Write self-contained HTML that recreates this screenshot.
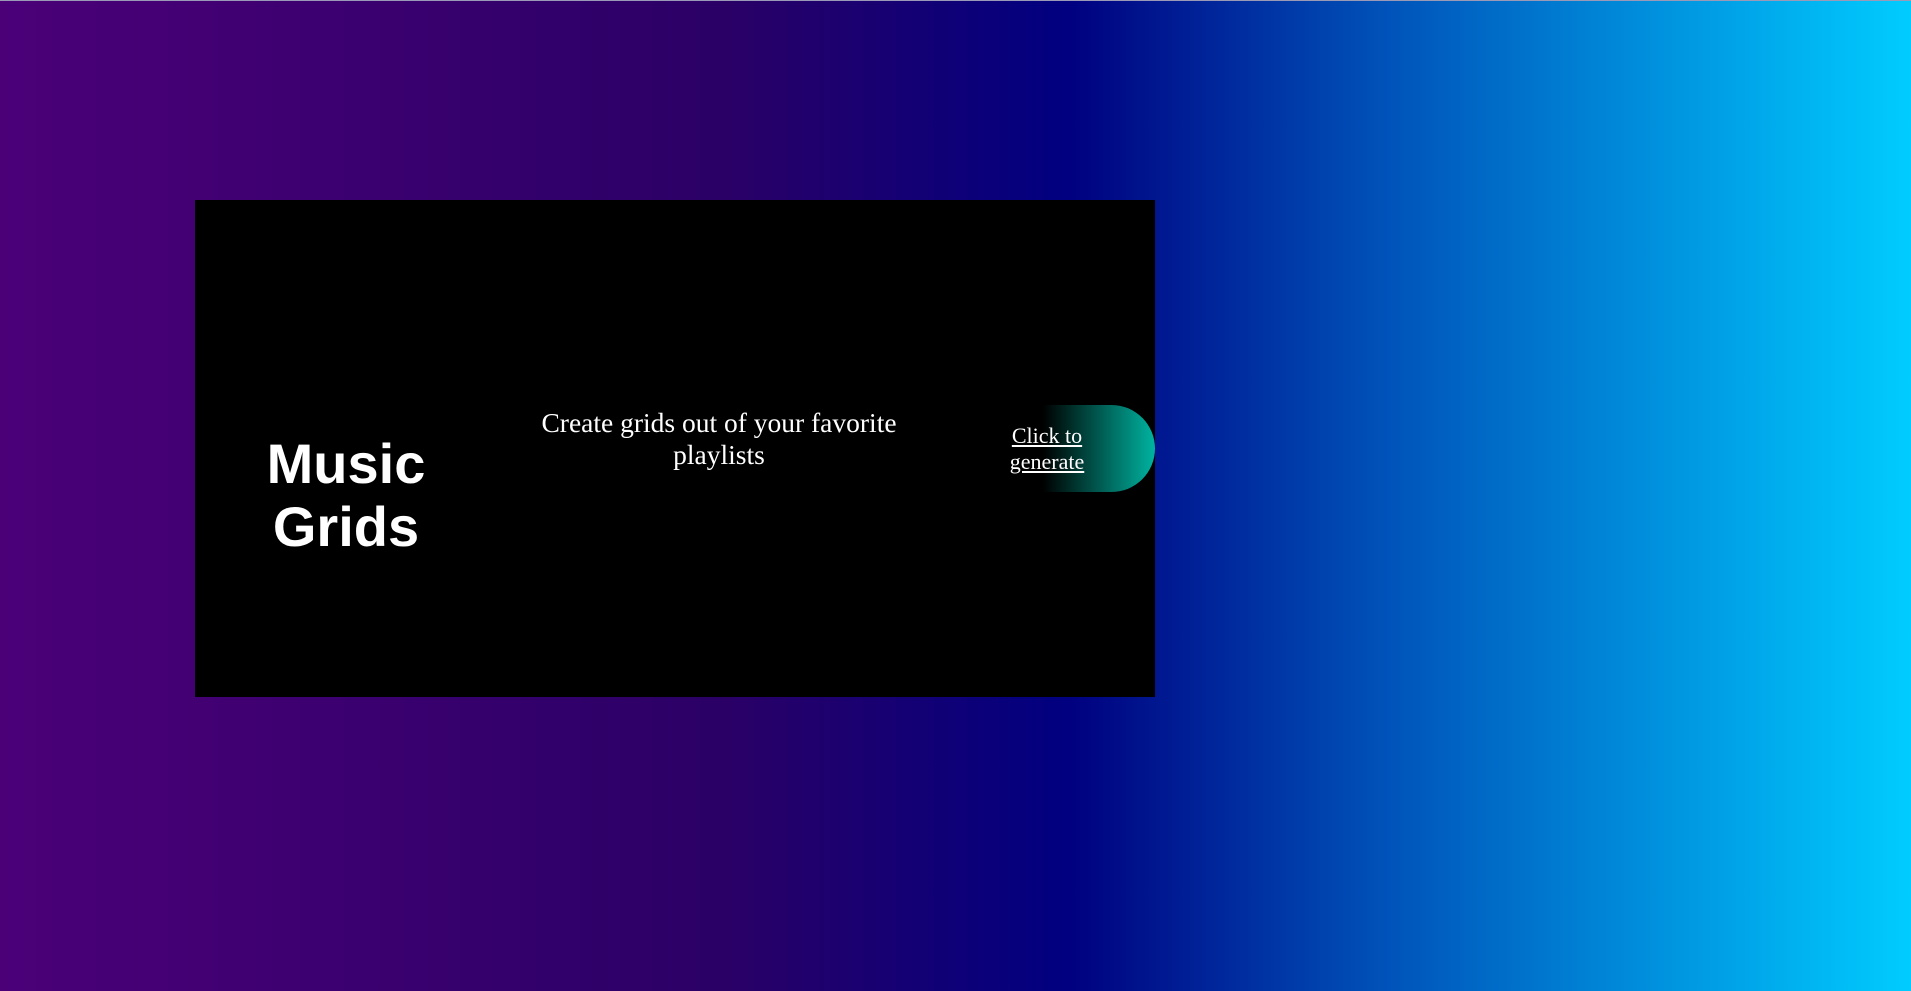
<!DOCTYPE html>
<html><head><meta charset="utf-8"><style>
html,body{margin:0;padding:0;width:1911px;height:991px;overflow:hidden}
body{background:linear-gradient(to right,#4b0078 0%,#2a0066 38%,#000080 56%,#0050b8 72%,#00ccff 100%);position:relative}
.top{position:absolute;left:0;top:0;width:100%;height:1px;background:#9a9ab8}
.card{position:absolute;left:195px;top:200px;width:960px;height:497px;background:#000}
.title{position:absolute;left:246px;width:200px;top:432px;text-align:center;color:#fff;font:bold 56px/63px "Liberation Sans",sans-serif}
.sub{position:absolute;left:519px;width:400px;top:407px;text-align:center;color:#fff;font:27.5px/32px "Liberation Serif",serif}
.btn{position:absolute;left:990px;top:405px;width:165px;height:87px;border-radius:0 44px 44px 0;background:linear-gradient(to right,rgba(0,0,0,0) 32%,#00b3a0 100%)}
.btxt{position:absolute;left:987px;width:120px;top:423px;text-align:center;color:#fff;font:22px/26px "Liberation Serif",serif;text-decoration:underline}
</style></head><body>
<div class="top"></div>
<div class="card"></div>
<div class="title">Music<br>Grids</div>
<div class="sub">Create grids out of your favorite playlists</div>
<div class="btn"></div>
<div class="btxt">Click to<br>generate</div>
</body></html>
